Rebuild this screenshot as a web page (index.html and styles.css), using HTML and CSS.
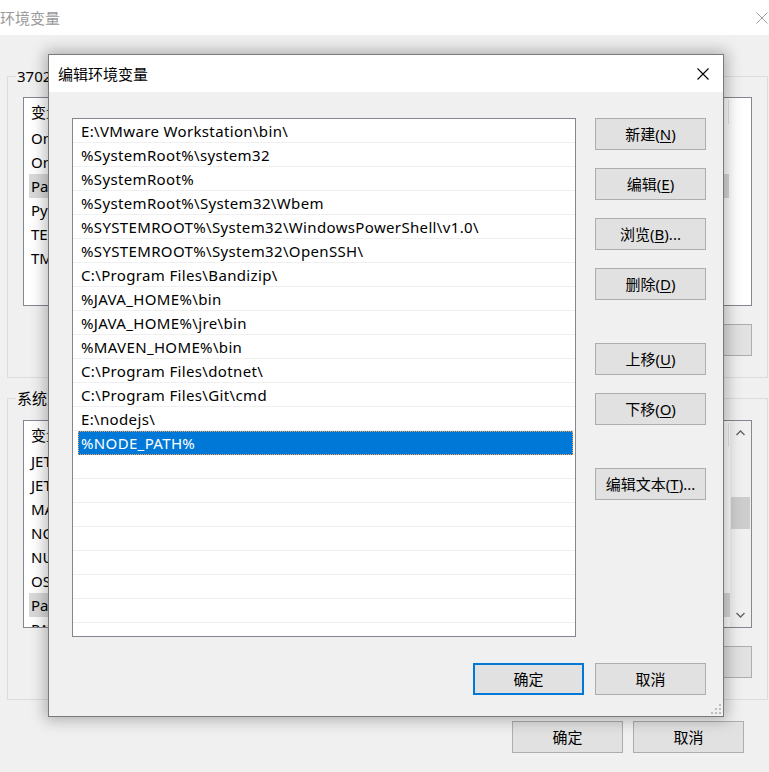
FILE: index.html
```html
<!DOCTYPE html>
<html lang="zh-CN">
<head>
<meta charset="utf-8">
<title>编辑环境变量</title>
<link rel="stylesheet" href="styles.css">
</head>
<body>
<div class="bg-window">
  <div class="bg-title">
    <span>环境变量</span>
    <svg class="bg-close" width="12" height="12" viewBox="0 0 12 12"><path d="M0.5 0.5 L11.5 11.5 M11.5 0.5 L0.5 11.5" stroke="#a0a0a0" stroke-width="1" fill="none"/></svg>
  </div>
  <div class="bg-body">
    <div class="group group1">
      <div class="group-label">37023 的用户变量(U)</div>
      <div class="bg-list list1">
        <div class="bg-rows">
          <div class="bg-head"><span class="c1">变量</span><span class="c2">值</span></div>
          <div class="bg-row">OneDrive</div>
          <div class="bg-row">OneDriveConsumer</div>
          <div class="bg-row sel">Path</div>
          <div class="bg-row">PyCharm Community Edition</div>
          <div class="bg-row">TEMP</div>
          <div class="bg-row">TMP</div>
        </div>
      </div>
      <div class="bg-btns">
        <div class="btn">新建(<u>N</u>)...</div>
        <div class="btn">编辑(<u>E</u>)...</div>
        <div class="btn">删除(<u>D</u>)</div>
      </div>
    </div>
    <div class="group group2">
      <div class="group-label">系统变量(S)</div>
      <div class="bg-list list2">
        <div class="bg-rows">
          <div class="bg-head"><span class="c1">变量</span><span class="c2">值</span></div>
          <div class="bg-row">JETBRAINS_CLIENT_VM_OPTIONS</div>
          <div class="bg-row">JETBRAINSCLIENT_VM_OPTIONS</div>
          <div class="bg-row">MAVEN_HOME</div>
          <div class="bg-row">NODE_PATH</div>
          <div class="bg-row">NUMBER_OF_PROCESSORS</div>
          <div class="bg-row">OS</div>
          <div class="bg-row sel">Path</div>
          <div class="bg-row">PATHEXT</div>
        </div>
        <div class="sb">
          <div class="sb-btn"><svg width="9" height="6" viewBox="0 0 9 6"><path d="M0.5 5 L4.5 1 L8.5 5" stroke="#606060" stroke-width="1.3" fill="none"/></svg></div>
          <div class="sb-track"><div class="sb-thumb"></div></div>
          <div class="sb-btn"><svg width="9" height="6" viewBox="0 0 9 6"><path d="M0.5 1 L4.5 5 L8.5 1" stroke="#606060" stroke-width="1.3" fill="none"/></svg></div>
        </div>
      </div>
      <div class="bg-btns">
        <div class="btn">新建(<u>W</u>)...</div>
        <div class="btn">编辑(<u>I</u>)...</div>
        <div class="btn">删除(<u>L</u>)</div>
      </div>
    </div>
    <div class="bg-footer">
      <div class="btn">确定</div>
      <div class="btn">取消</div>
    </div>
  </div>
</div>

<div class="dialog">
  <div class="dlg-title">
    <span>编辑环境变量</span>
    <svg width="12" height="12" viewBox="0 0 12 12"><path d="M0.5 0.5 L11.5 11.5 M11.5 0.5 L0.5 11.5" stroke="#000" stroke-width="1.1" fill="none"/></svg>
  </div>
  <div class="dlg-body">
    <div class="dlg-main">
      <div class="path-list">
        <div class="row">E:\VMware Workstation\bin\</div>
        <div class="row">%SystemRoot%\system32</div>
        <div class="row">%SystemRoot%</div>
        <div class="row">%SystemRoot%\System32\Wbem</div>
        <div class="row">%SYSTEMROOT%\System32\WindowsPowerShell\v1.0\</div>
        <div class="row">%SYSTEMROOT%\System32\OpenSSH\</div>
        <div class="row">C:\Program Files\Bandizip\</div>
        <div class="row">%JAVA_HOME%\bin</div>
        <div class="row">%JAVA_HOME%\jre\bin</div>
        <div class="row">%MAVEN_HOME%\bin</div>
        <div class="row">C:\Program Files\dotnet\</div>
        <div class="row">C:\Program Files\Git\cmd</div>
        <div class="row">E:\nodejs\</div>
        <div class="row sel">%NODE_PATH%</div>
        <div class="row"></div>
        <div class="row"></div>
        <div class="row"></div>
        <div class="row"></div>
        <div class="row"></div>
        <div class="row"></div>
        <div class="row"></div>
        <div class="row"></div>
      </div>
      <div class="btn-col">
        <div class="btn">新建(<u>N</u>)</div>
        <div class="btn">编辑(<u>E</u>)</div>
        <div class="btn">浏览(<u>B</u>)...</div>
        <div class="btn">删除(<u>D</u>)</div>
        <div class="btn far">上移(<u>U</u>)</div>
        <div class="btn">下移(<u>O</u>)</div>
        <div class="btn far">编辑文本(<u>T</u>)...</div>
      </div>
    </div>
    <div class="dlg-footer">
      <div class="btn default">确定</div>
      <div class="btn">取消</div>
    </div>
  </div>
  <svg class="grip" width="11" height="11" viewBox="0 0 11 11">
    <rect x="8" y="0" width="2" height="2" fill="#bdbdbd"/>
    <rect x="4" y="4" width="2" height="2" fill="#bdbdbd"/>
    <rect x="8" y="4" width="2" height="2" fill="#bdbdbd"/>
    <rect x="0" y="8" width="2" height="2" fill="#bdbdbd"/>
    <rect x="4" y="8" width="2" height="2" fill="#bdbdbd"/>
    <rect x="8" y="8" width="2" height="2" fill="#bdbdbd"/>
  </svg>
</div>
</body>
</html>
```

FILE: styles.css
```css
* { box-sizing: border-box; }

html, body {
  margin: 0;
  padding: 0;
}

body {
  width: 769px;
  height: 772px;
  overflow: hidden;
  position: relative;
  background: #f0f0f0;
  color: #000;
  font-family: "Segoe UI", "Noto Sans", "Noto Sans CJK SC", sans-serif;
  font-size: 15px;
}

u { text-decoration: underline; text-underline-offset: 2px; }

/* ---------- background window ---------- */
.bg-window {
  width: 769px;
  height: 772px;
}

.bg-title {
  height: 35px;
  background: #fff;
  color: #9a9a9a;
  display: flex;
  align-items: center;
  justify-content: space-between;
  padding-right: 1px;
  line-height: 20px;
}

.bg-body {
  padding-left: 7px;
}

.group {
  width: 761px;
  border: 1px solid #dcdcdc;
}

.group1 { margin-top: 41px; }
.group2 { margin-top: 20px; }

.group-label {
  width: fit-content;
  margin: -11px 0 0 8px;
  padding: 0 1px;
  background: #f0f0f0;
  line-height: 20px;
  white-space: nowrap;
}

.bg-list {
  margin: 11px 15px 0 15px;
  border: 1px solid #828790;
  background: #fff;
  overflow: hidden;
  display: flex;
}

.list1 { height: 209px; }
.list2 { height: 208px; margin-top: 12px; }

.bg-rows {
  flex: 1;
  min-width: 0;
}

.bg-head {
  height: 28px;
  display: flex;
  align-items: center;
}

.bg-head .c1 {
  width: 226px;
  padding-left: 7px;
  line-height: 24px;
}

.bg-head .c2 {
  width: 479px;
  height: 24px;
  line-height: 24px;
  padding-left: 6px;
  border-right: 1px solid #e5e5e5;
}

.bg-row {
  height: 24px;
  line-height: 24px;
  padding-left: 7px;
  white-space: nowrap;
}

.bg-row.sel {
  background: #d9d9d9;
  margin-left: 5px;
  padding-left: 2px;
}

.list1 .bg-row.sel {
  margin-right: 22px;
}

.sb {
  width: 21px;
  background: #f0f0f0;
  display: flex;
  flex-direction: column;
}

.sb-btn {
  height: 24px;
  display: flex;
  align-items: center;
  justify-content: center;
}

.sb-track {
  flex: 1;
  padding-top: 52px;
}

.sb-thumb {
  height: 32px;
  margin: 0 1px;
  background: #cdcdcd;
}

.bg-btns {
  display: flex;
  justify-content: flex-end;
  gap: 10px;
  margin: 18px 15px 21px 0;
}

.bg-footer {
  display: flex;
  justify-content: flex-end;
  gap: 10px;
  margin-top: 21px;
  padding-right: 25px;
}

.btn {
  width: 111px;
  height: 32px;
  border: 1px solid #adadad;
  background: #e1e1e1;
  display: flex;
  align-items: center;
  justify-content: center;
  white-space: nowrap;
  line-height: 20px;
}

/* ---------- dialog ---------- */
.dialog {
  position: absolute;
  left: 48px;
  top: 54px;
  width: 676px;
  height: 663px;
  border: 1px solid #7a7a7a;
  background: #f0f0f0;
  box-shadow: 0 0 14px 3px rgba(0, 0, 0, 0.28);
}

.dlg-title {
  height: 37px;
  background: #fff;
  display: flex;
  align-items: center;
  justify-content: space-between;
  padding: 0 14px 0 9px;
  line-height: 20px;
}

.dlg-body {
  padding: 26px 17px 0 23px;
}

.dlg-main {
  display: flex;
  gap: 19px;
}

.path-list {
  width: 504px;
  height: 519px;
  border: 1px solid #828790;
  background: #fff;
  overflow: hidden;
}

.row {
  height: 24px;
  line-height: 24px;
  padding-left: 8px;
  border-bottom: 1px solid #f0f0f0;
  white-space: nowrap;
  letter-spacing: 0.35px;
}

.row.sel {
  background: #0078d7;
  color: #fff;
  margin: 0 2px 0 5px;
  padding-left: 3px;
  border-bottom: none;
  outline: 1px dotted #f3a257;
  outline-offset: -1px;
}

.btn-col {
  width: 111px;
  display: flex;
  flex-direction: column;
  gap: 18px;
}

.btn-col .far { margin-top: 25px; }

.dlg-footer {
  margin-top: 26px;
  display: flex;
  justify-content: flex-end;
  gap: 11px;
}

.btn.default {
  border: 2px solid #0078d7;
}

.grip {
  position: absolute;
  right: 1px;
  bottom: 1px;
}
```
